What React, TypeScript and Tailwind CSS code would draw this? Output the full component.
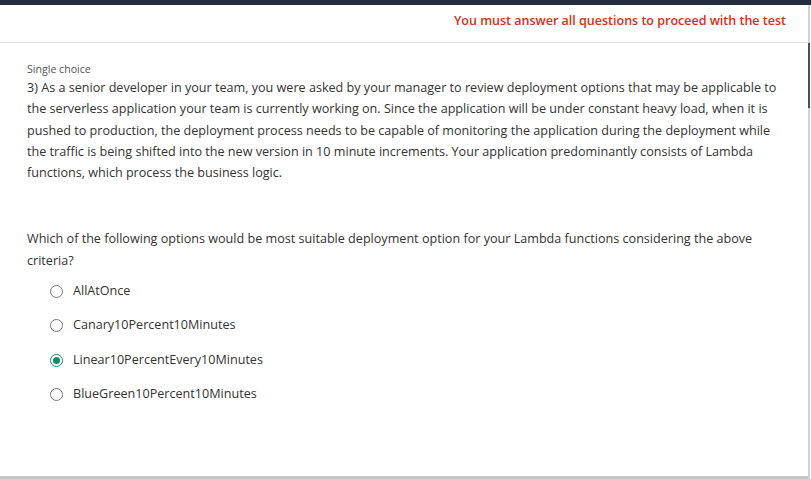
import React from "react";

const options = [
  "AllAtOnce",
  "Canary10Percent10Minutes",
  "Linear10PercentEvery10Minutes",
  "BlueGreen10Percent10Minutes",
];

export default function App() {
  const selected = 2;
  return (
    <div
      className="w-[811px] h-[479px] bg-white overflow-hidden flex flex-col"
      style={{ fontFamily: '"Open Sans", "Noto Sans", sans-serif' }}
    >
      <div className="h-[5px] bg-[#232f3e] shrink-0" />
      <div className="flex flex-1 min-h-0">
        <div className="flex-1 flex flex-col min-w-0">
          <div className="h-[38px] border-b border-[#dcdcdc] flex items-center justify-end pr-[22px] shrink-0">
            <span className="text-[12.5px] font-semibold text-[#d13212] leading-none pb-[4px]">
              You must answer all questions to proceed with the test
            </span>
          </div>
          <div className="flex-1 pl-[27px] pr-[24px] pt-[19px] border-b-[3px] border-[#c4c4c4]">
            <div className="text-[10.6px] leading-[14px] text-[#555]">Single choice</div>
            <p className="text-[12.6px] leading-[21.3px] text-[#333] mt-[1px]">
              3) As a senior developer in your team, you were asked by your manager to review deployment options that may be applicable to the serverless application your team is currently working on. Since the application will be under constant heavy load, when it is pushed to production, the deployment process needs to be capable of monitoring the application during the deployment while the traffic is being shifted into the new version in 10 minute increments. Your application predominantly consists of Lambda functions, which process the business logic.
            </p>
            <p className="text-[12.6px] leading-[21.3px] text-[#333] mt-[45px]">
              Which of the following options would be most suitable deployment option for your Lambda functions considering the above criteria?
            </p>
            <div className="flex flex-col ml-[23px] mt-[3px]">
              {options.map((o, i) => (
                <div key={o} className="h-[34.4px] flex items-center gap-[10px]">
                  {i === selected ? (
                    <span className="w-[13px] h-[13px] rounded-full border-[1.5px] border-[#1b8a6b] flex items-center justify-center">
                      <span className="w-[7px] h-[7px] rounded-full bg-[#1b8a6b]" />
                    </span>
                  ) : (
                    <span className="w-[13px] h-[13px] rounded-full border border-[#777]" />
                  )}
                  <span className="text-[12.6px] text-[#333] leading-none">{o}</span>
                </div>
              ))}
            </div>
          </div>
        </div>
        <div className="w-[2px] bg-[#d4d4d4] flex flex-col">
          <div className="h-[65px] bg-[#4a4f55]" style={{ marginTop: 38 }} />
        </div>
        <div className="w-[1px] bg-white" />
      </div>
    </div>
  );
}
